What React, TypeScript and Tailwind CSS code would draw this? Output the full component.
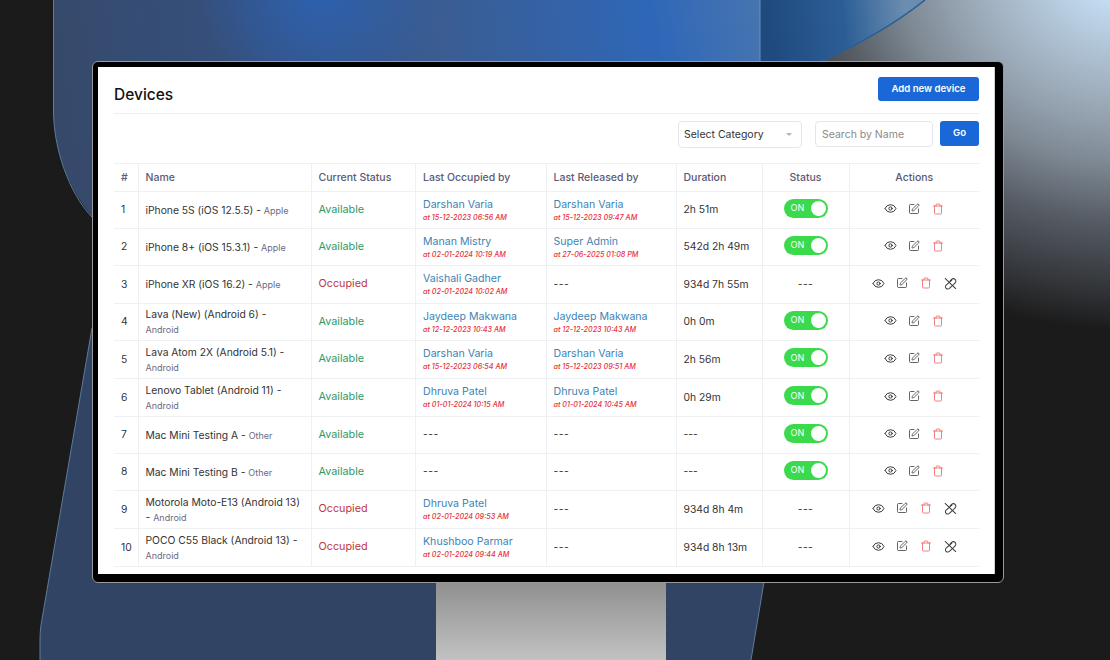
import React from "react";
import { Eye, SquarePen, Trash } from "lucide-react";

type Row = {
  n: number;
  name: string;
  tail: string;
  cat: string;
  wrap: boolean;
  occ: boolean;
  by?: [string, string];
  rel?: [string, string];
  dur: string;
  h: string;
};

const rows: Row[] = [
  { n: 1, name: "iPhone 5S (iOS 12.5.5) -", tail: "", cat: "Apple", wrap: false, occ: false, by: ["Darshan Varia", "at 15-12-2023 06:56 AM"], rel: ["Darshan Varia", "at 15-12-2023 09:47 AM"], dur: "2h 51m", h: "h-[37px]" },
  { n: 2, name: "iPhone 8+ (iOS 15.3.1) -", tail: "", cat: "Apple", wrap: false, occ: false, by: ["Manan Mistry", "at 02-01-2024 10:19 AM"], rel: ["Super Admin", "at 27-06-2025 01:08 PM"], dur: "542d 2h 49m", h: "h-[37px]" },
  { n: 3, name: "iPhone XR (iOS 16.2) -", tail: "", cat: "Apple", wrap: false, occ: true, by: ["Vaishali Gadher", "at 02-01-2024 10:02 AM"], dur: "934d 7h 55m", h: "h-[38px]" },
  { n: 4, name: "Lava (New) (Android 6) -", tail: "", cat: "Android", wrap: true, occ: false, by: ["Jaydeep Makwana", "at 12-12-2023 10:43 AM"], rel: ["Jaydeep Makwana", "at 12-12-2023 10:43 AM"], dur: "0h 0m", h: "h-[37px]" },
  { n: 5, name: "Lava Atom 2X (Android 5.1) -", tail: "", cat: "Android", wrap: true, occ: false, by: ["Darshan Varia", "at 15-12-2023 06:54 AM"], rel: ["Darshan Varia", "at 15-12-2023 09:51 AM"], dur: "2h 56m", h: "h-[38px]" },
  { n: 6, name: "Lenovo Tablet (Android 11) -", tail: "", cat: "Android", wrap: true, occ: false, by: ["Dhruva Patel", "at 01-01-2024 10:15 AM"], rel: ["Dhruva Patel", "at 01-01-2024 10:45 AM"], dur: "0h 29m", h: "h-[38px]" },
  { n: 7, name: "Mac Mini Testing A -", tail: "", cat: "Other", wrap: false, occ: false, dur: "---", h: "h-[37px]" },
  { n: 8, name: "Mac Mini Testing B -", tail: "", cat: "Other", wrap: false, occ: false, dur: "---", h: "h-[37px]" },
  { n: 9, name: "Motorola Moto-E13 (Android 13)", tail: "-", cat: "Android", wrap: true, occ: true, by: ["Dhruva Patel", "at 02-01-2024 09:53 AM"], dur: "934d 8h 4m", h: "h-[38px]" },
  { n: 10, name: "POCO C55 Black (Android 13) -", tail: "", cat: "Android", wrap: true, occ: true, by: ["Khushboo Parmar", "at 02-01-2024 09:44 AM"], dur: "934d 8h 13m", h: "h-[38px]" },
];

const headBase = "border-t border-b border-[#eef0f4] font-medium text-[#5d5a73] text-[10.5px]";
const headCell = headBase + " border-r px-[7px] text-left";
const cell = "border-b border-r border-[#eef0f4] px-[7px] align-middle";

function Person({ v }: { v?: [string, string] }) {
  if (!v) return <span className="tracking-[0.5px]">---</span>;
  return (
    <div className="flex flex-col">
      <span className="text-[#3f83b5] text-[10.6px] leading-[14px]">{v[0]}</span>
      <span className="text-[#e8303a] text-[7.2px] leading-[11px] italic font-medium">{v[1]}</span>
    </div>
  );
}

function LinkOff() {
  return (
    <svg viewBox="0 0 14 14" className="w-[13px] h-[13px]" fill="none" stroke="#3c3c3c" strokeWidth="1.1" strokeLinecap="round" strokeLinejoin="round">
      <path d="M1.2 1.6 L12.6 12.4" />
      <path d="M6.6 4.2 L8.2 2.6 A2.6 2.6 0 0 1 12 6.300 L10.400 7.900" />
      <path d="M8.400 3.400 L2.300 8.700 A2.500 2.500 0 0 0 5.800 12.300 L9.900 8.600" />
    </svg>
  );
}

function App() {
  return (
    <div className="relative w-[1110px] h-[660px] overflow-hidden bg-[#1b1b1b] pl-[92px] pt-[61px] font-['Inter',sans-serif]">
      <svg viewBox="0 0 1110 660" className="absolute inset-0 w-[1110px] h-[660px]">
        <defs>
          <radialGradient id="corner" gradientUnits="userSpaceOnUse" cx="0" cy="0" r="1" gradientTransform="translate(1130 -40) scale(420 370)">
            <stop offset="0.12" stopColor="#c3dcf2" />
            <stop offset="0.4" stopColor="#9aa8b6" />
            <stop offset="0.55" stopColor="#7e8994" />
            <stop offset="0.7" stopColor="#585e66" />
            <stop offset="0.82" stopColor="#40444a" />
            <stop offset="0.94" stopColor="#28292b" />
            <stop offset="1" stopColor="#1b1b1b" />
          </radialGradient>
          <linearGradient id="panel" gradientUnits="userSpaceOnUse" x1="60" y1="120" x2="760" y2="20">
            <stop offset="0" stopColor="#36496a" />
            <stop offset="0.28" stopColor="#35517f" />
            <stop offset="0.55" stopColor="#3a5d92" />
            <stop offset="0.85" stopColor="#2f67b8" />
            <stop offset="1" stopColor="#4674b0" />
          </linearGradient>
          <radialGradient id="glow" gradientUnits="userSpaceOnUse" cx="320" cy="-10" r="120">
            <stop offset="0" stopColor="#2c62b4" stopOpacity="0.9" />
            <stop offset="1" stopColor="#2c62b4" stopOpacity="0" />
          </radialGradient>
          <linearGradient id="deep" gradientUnits="userSpaceOnUse" x1="770" y1="30" x2="905" y2="15">
            <stop offset="0" stopColor="#1f4a7e" />
            <stop offset="0.55" stopColor="#2c5e96" />
            <stop offset="1" stopColor="#6a8db0" />
          </linearGradient>
          <linearGradient id="neck" x1="0" y1="0" x2="0" y2="1">
            <stop offset="0" stopColor="#8e8e8e" />
            <stop offset="1" stopColor="#c2c2c2" />
          </linearGradient>
        </defs>
        <rect x="760" y="0" width="350" height="400" fill="url(#corner)" />
        <path d="M760 0 H925 C895 24 860 44 820 62 H760 Z" fill="url(#deep)" />
        <path d="M925 0 C895 24 860 44 820 62" fill="none" stroke="#2a5e96" strokeWidth="1.6" />
        <path d="M92 328 L41 625 Q40 632 40 640 V660 H751 L764 582 V300 H92 Z" fill="#324463" />
        <path d="M53.500 0 V114 C55 160 75 200 100 225 V120 H760 V0 Z" fill="url(#panel)" />
        <rect x="180" y="0" width="280" height="70" fill="url(#glow)" />
        <path d="M53.500 0 V114 C55 160 75 200 92 217" fill="none" stroke="#5f7a9c" strokeWidth="1" />
        <path d="M92 328 L41 625 Q40 632 40 640 V660" fill="none" stroke="#5f7a9c" strokeWidth="1" />
        <path d="M764 582 L751 660" fill="none" stroke="#5f7a9c" strokeWidth="1" />
        <path d="M760 0 V62" fill="none" stroke="#6f8fc0" strokeWidth="1" />
        <rect x="436" y="580" width="230" height="80" fill="url(#neck)" />
      </svg>

      <div className="relative w-[912px] h-[522px] rounded-md border border-[#9a9a9a] bg-black pt-[5px] pl-[5px] pr-[8px] pb-[6px]">
        <div className="w-[897px] h-[507px] bg-white border-r border-[#cfcfcf] pl-4 pr-[15px] overflow-hidden">
          <div className="flex justify-between items-start h-[47px] border-b border-[#eceef1] pt-[10px]">
            <h1 className="mt-[7px] text-[15.5px] leading-[22px] font-medium text-[#111]">Devices</h1>
            <button className="w-[101px] h-[24px] rounded-[3px] bg-[#1a68d8] text-white text-[9.6px] font-semibold">Add new device</button>
          </div>

          <div className="flex justify-end items-start h-[49px] pt-[7px]">
            <div className="w-[124px] h-[27px] rounded-[4px] border border-[#e4e6ea] flex items-center justify-between pl-[5px] pr-[9px] text-[10.5px] text-[#333]">
              <span>Select Category</span>
              <span className="w-0 h-0 border-l-[3px] border-r-[3px] border-t-[3px] border-l-transparent border-r-transparent border-t-[#b5b5b5]" />
            </div>
            <input
              placeholder="Search by Name"
              className="ml-[13px] w-[118px] h-[26px] rounded-[4px] border border-[#e4e6ea] px-[6px] text-[10.5px] placeholder:text-[#8a8a8a] outline-none"
            />
            <button className="ml-[7px] w-[39px] h-[25px] rounded-[3px] bg-[#1a68d8] text-white text-[9.6px] font-semibold">Go</button>
          </div>

          <table className="table-fixed w-[865px] border-collapse text-[10.3px] text-[#333]">
            <colgroup>
              <col className="w-[24px]" />
              <col className="w-[173px]" />
              <col className="w-[104.5px]" />
              <col className="w-[130.5px]" />
              <col className="w-[130px]" />
              <col className="w-[86px]" />
              <col className="w-[87px]" />
              <col className="w-[130px]" />
            </colgroup>
            <thead>
              <tr className="h-[28px]">
                <th className={headCell}>#</th>
                <th className={headCell}>Name</th>
                <th className={headCell}>Current Status</th>
                <th className={headCell}>Last Occupied by</th>
                <th className={headCell}>Last Released by</th>
                <th className={headCell}>Duration</th>
                <th className={headBase + " border-r px-[7px] text-center"}>Status</th>
                <th className={headBase + " text-center"}>Actions</th>
              </tr>
            </thead>
            <tbody>
              {rows.map((r) => (
                <tr key={r.n} className={r.h}>
                  <td className={cell}>{r.n}</td>
                  <td className={cell + " leading-[15px] whitespace-nowrap"}>
                    {r.name}
                    {r.wrap ? <br /> : " "}
                    {r.tail ? r.tail + " " : ""}
                    <span className="text-[#6c6a80] text-[9px]">{r.cat}</span>
                  </td>
                  <td className={cell + " text-[10.8px] " + (r.occ ? "text-[#c0343c]" : "text-[#2f9a68]")}>{r.occ ? "Occupied" : "Available"}</td>
                  <td className={cell}><Person v={r.by} /></td>
                  <td className={cell}><Person v={r.rel} /></td>
                  <td className={cell}>{r.dur}</td>
                  <td className={cell + " text-center"}>
                    {r.occ ? (
                      <span className="tracking-[0.5px]">---</span>
                    ) : (
                      <div className="mx-auto mb-1 w-[44px] h-[19px] rounded-full bg-[#3bd94c] flex items-center justify-between pl-[7px] pr-[2px]">
                        <span className="text-white text-[9px]">ON</span>
                        <span className="w-[15px] h-[15px] rounded-full bg-white" />
                      </div>
                    )}
                  </td>
                  <td className="border-b border-[#eef0f4]">
                    <div className="flex justify-center items-center mb-[3px]">
                      <span className="w-[24px] flex justify-center"><Eye size={13} strokeWidth={1.8} color="#333" /></span>
                      <span className="w-[24px] flex justify-center"><SquarePen size={12} strokeWidth={1.6} color="#3c3c3c" /></span>
                      <span className="w-[24px] flex justify-center"><Trash size={12} strokeWidth={1.5} color="#ef5a5a" /></span>
                      {r.occ && <span className="w-[24px] flex justify-center"><LinkOff /></span>}
                    </div>
                  </td>
                </tr>
              ))}
            </tbody>
          </table>
        </div>
      </div>
    </div>
  );
}

export default App;
